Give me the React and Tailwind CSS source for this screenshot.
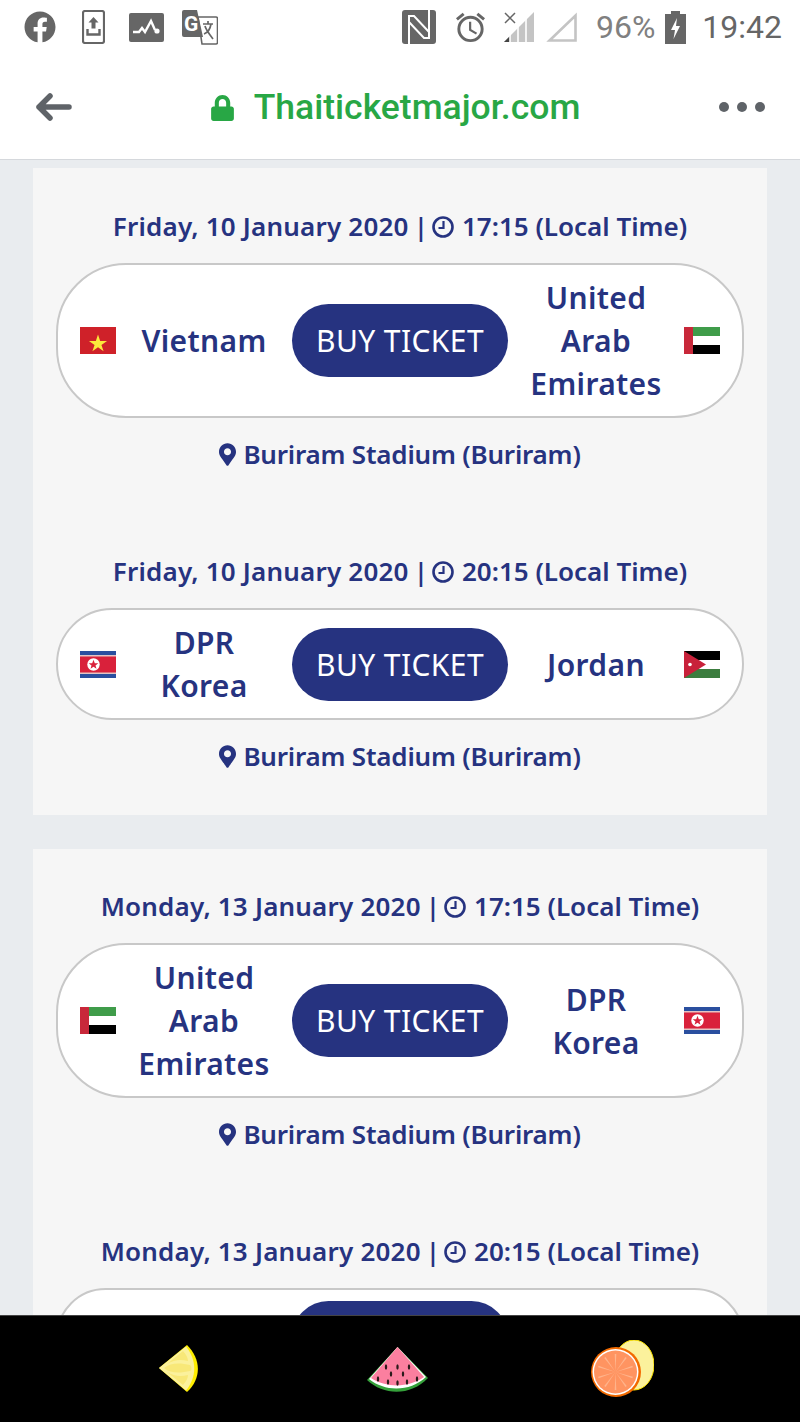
import { FaFacebook, FaMapMarkerAlt, FaLock } from 'react-icons/fa';
import { MdOutlineAlarm } from 'react-icons/md';

const matches = [
    { date: 'Friday, 10 January 2020', time: '17:15', home: ['Vietnam'], homeFlag: 'vn', away: ['United', 'Arab', 'Emirates'], awayFlag: 'ae' },
    { date: 'Friday, 10 January 2020', time: '20:15', home: ['DPR', 'Korea'], homeFlag: 'kp', away: ['Jordan'], awayFlag: 'jo' },
    { date: 'Monday, 13 January 2020', time: '17:15', home: ['United', 'Arab', 'Emirates'], homeFlag: 'ae', away: ['DPR', 'Korea'], awayFlag: 'kp' },
    // only the top of this row shows above the black bar
    { date: 'Monday, 13 January 2020', time: '20:15', cut: true },
];

function Flag({ code }) {
    return (
        <svg viewBox="0 0 36 27" className="w-9 h-[27px] shrink-0">
            {code === 'vn' && (
                <>
                    <rect width="36" height="27" fill="#cf2129" />
                    <path d="M18 5.500l2.700 8.200h8.600l-7 5 2.700 8-7-5-7 5 2.700-8-7-5h8.600z" transform="translate(3.600 3) scale(0.8)" fill="#fbe83c" />
                </>
            )}
            {code === 'ae' && (
                <>
                    <rect width="36" height="9" fill="#3f9c4a" />
                    <rect y="9" width="36" height="9" fill="#fff" />
                    <rect y="18" width="36" height="9" fill="#000" />
                    <rect width="9" height="27" fill="#c8283a" />
                </>
            )}
            {code === 'kp' && (
                <>
                    <rect width="36" height="27" fill="#2a4f9f" />
                    <rect y="4" width="36" height="19" fill="#e3c4c4" />
                    <rect y="5.500" width="36" height="16" fill="#d9213b" />
                    <circle cx="13.500" cy="13.500" r="6.200" fill="#fff" />
                    <path d="M13.500 8.800l1.300 3.400h3.500l-2.800 2.200 1 3.400-3-2-3 2 1-3.400-2.800-2.200h3.500z" fill="#d9213b" />
                </>
            )}
            {code === 'jo' && (
                <>
                    <rect width="36" height="9" fill="#000" />
                    <rect y="9" width="36" height="9" fill="#fff" />
                    <rect y="18" width="36" height="9" fill="#3c7d3f" />
                    <path d="M0 0L22 13.500 0 27z" fill="#c8213a" />
                    <circle cx="6" cy="13.500" r="1.800" fill="#fff" />
                </>
            )}
        </svg>
    );
}

function Team({ lines }) {
    return (
        <div className="flex-1 text-center text-[30px] leading-[43px] font-semibold tracking-[0.35px] text-[#263380]">
            {lines.map(line => <div key={line}>{line}</div>)}
        </div>
    );
}

function Match({ match, first }) {
    return (
        <div className={first ? '' : 'mt-[78px]'}>
            <div className="flex items-center justify-center h-[39px] text-[26px] font-semibold text-[#263380]">
                <span className="tracking-[0.2px]">{match.date}</span>
                <span className="ml-[5px]">|</span>
                <svg viewBox="0 0 22 22" className="w-[22px] h-[22px] ml-1 mr-2">
                    <circle cx="11" cy="11" r="9.500" fill="none" stroke="currentColor" strokeWidth="2.600" />
                    <path d="M11.500 5v7H6.500" fill="none" stroke="currentColor" strokeWidth="2.200" />
                </svg>
                <span>{match.time} (Local Time)</span>
            </div>
            <div className="mt-[17px] flex items-center justify-between px-[22px] py-[11px] bg-white border-2 border-[#c8c8c8] rounded-[70px]">
                {!match.cut && <Flag code={match.homeFlag} />}
                {!match.cut && <Team lines={match.home} />}
                <button className={`w-[216px] h-[73px] shrink-0 rounded-full bg-[#263380] text-white text-[30px] tracking-[0.4px] font-normal ${match.cut ? 'mx-auto' : ''}`}>
                    {!match.cut && 'BUY TICKET'}
                </button>
                {!match.cut && <Team lines={match.away} />}
                {!match.cut && <Flag code={match.awayFlag} />}
            </div>
            {!match.cut && (
                <div className="mt-[17px] flex items-center justify-center h-[39px] text-[26px] font-semibold tracking-[-0.2px] text-[#263380]">
                    <FaMapMarkerAlt className="mr-[7px] w-[17px] h-[23px]" />
                    <span>Buriram Stadium (Buriram)</span>
                </div>
            )}
        </div>
    );
}

function StatusBar() {
    return (
        <div className="flex items-center h-[54px] pl-6 pr-[18px] text-[#666] font-['Roboto',sans-serif]">
            <FaFacebook className="w-8 h-8" />
            <svg viewBox="0 0 23 34" className="ml-[26px] w-[23px] h-[34px]">
                <rect x="1" y="1" width="21" height="32" rx="2" fill="none" stroke="#666" strokeWidth="2.200" />
                <path d="M11.500 7l5 5.500h-3v6h-4v-6h-3z" fill="#666" />
                <path d="M5.500 19v5.500h12V19" fill="none" stroke="#666" strokeWidth="2.400" />
            </svg>
            <svg viewBox="0 0 35 29" className="ml-6 w-[35px] h-[29px]">
                <rect width="35" height="29" rx="2" fill="#666" />
                <path d="M4 19h6l3-4 3 4 6-11 4 9" fill="none" stroke="#fff" strokeWidth="2.400" />
                <circle cx="28" cy="18" r="2.600" fill="#fff" />
            </svg>
            <svg viewBox="0 0 36 35" className="ml-[18px] w-9 h-[35px]">
                <path d="M16 7h18a1.500 1.500 0 0 1 1.500 1.500v24a1.500 1.500 0 0 1-1.500 1.500H20z" fill="#fff" stroke="#666" strokeWidth="1.600" />
                <path d="M2 0h13l6 27H2a2 2 0 0 1-2-2V2a2 2 0 0 1 2-2z" fill="#666" />
                <text x="2" y="21" fontSize="21" fontWeight="700" fontFamily="Roboto" fill="#fff">G</text>
                <path d="M21 14h10M26 11v3M29 14c-1 6-4 9-7 10M23 16c1 4 5 9 8 13" fill="none" stroke="#666" strokeWidth="1.700" />
            </svg>

            <svg viewBox="0 0 34 34" className="ml-auto w-[34px] h-[34px]">
                <rect width="34" height="34" rx="3" fill="#666" />
                <path d="M7 34V6h5l15 16M27 0v28h-5L7 12" fill="none" stroke="#fff" strokeWidth="2" />
            </svg>
            <MdOutlineAlarm className="ml-[17px] w-[35px] h-[35px]" />
            <svg viewBox="0 0 30 30" className="ml-4 w-[30px] h-[30px]">
                <path d="M30 0v30H0L9 21 V21L30 0z" fill="#c4c4c4" />
                <path d="M0 30l6-6v6z" fill="#444" />
                <path d="M6 30V18M14 30V14M22 30V6" stroke="#fff" strokeWidth="1.600" />
                <path d="M1 1l10 10M11 1L1 11" stroke="#666" strokeWidth="1.500" />
            </svg>
            <svg viewBox="0 0 31 30" className="ml-3 w-[31px] h-[30px]">
                <path d="M29.500 3.500v25H3.500z" fill="none" stroke="#c4c4c4" strokeWidth="2.600" />
            </svg>
            <span className="ml-[19px] text-[32px] leading-none text-[#808080]">96%</span>
            <svg viewBox="0 0 21 33" className="ml-[10px] w-[21px] h-[33px]">
                <path d="M6 0h9v3h6v30H0V3h6z" fill="#666" />
                <path d="M12 7l-6 12h4l-1.500 9 6.500-13h-4z" fill="#fff" />
            </svg>
            <span className="ml-4 text-[32px] leading-none">19:42</span>
        </div>
    );
}

function Lemon() {
    return (
        <svg viewBox="0 0 40 47" className="w-10 h-[47px]">
            <path d="M0 23L28 0C42 14 43 33 28 47z" fill="#ffee00" />
            <path d="M0 23L27 1.500C38 15 38 32 27 45.500z" fill="#fbf19c" />
            <path d="M5 23C12 17 22 18 31 20c2 2 2 5 0 6-9 2-19 3-26-3zM8 19L24 6c3 3 5 7 5 10-8-2-14-1-21 3zM8 27l16 13c3-3 5-7 5-10-8 2-14 1-21-3z" fill="#f8e878" />
        </svg>
    );
}

function Watermelon() {
    const seeds = [[19, 20], [30.500, 20], [42, 20], [24, 27], [36, 27], [21, 35], [30.500, 36], [40, 35], [11, 32], [50, 32]];
    return (
        <svg viewBox="0 0 61 45" className="w-[61px] h-[45px]">
            <path d="M30.500 0L61 31C44 49 17 49 0 33z" fill="#35a03a" />
            <path d="M30.500 0L59 30C43 45 18 45 2 32z" fill="#fff" />
            <path d="M30.500 0L57 30C42 41 19 41 4 31z" fill="#fb7f9f" />
            {seeds.map(([x, y]) => (
                <ellipse key={`${x}-${y}`} cx={x} cy={y} rx="1.200" ry="2.800" fill="#2a1a1a" />
            ))}
        </svg>
    );
}

function Citrus() {
    const spokes = [0, 36, 72, 108, 144, 180, 216, 252, 288, 324];
    return (
        <svg viewBox="0 0 63 57" className="w-[63px] h-[57px]">
            <ellipse cx="43" cy="25" rx="20" ry="25" fill="#fbf19c" stroke="#ffe600" strokeWidth="1" />
            <ellipse cx="25" cy="32" rx="25" ry="25" fill="#f26a00" />
            <circle cx="24.500" cy="32" r="23" fill="#fff" />
            <circle cx="24.500" cy="32" r="21.500" fill="#ff9461" />
            {spokes.map(a => (
                <path key={a} d="M24.500 32l-0.800-18h1.600z" fill="#ffb48c" transform={`rotate(${a} 24.500 32)`} />
            ))}
        </svg>
    );
}

export default function App() {
    return (
        <div className="flex flex-col w-[800px] h-[1422px] overflow-hidden bg-[#e9ecef] font-['Noto_Sans',sans-serif]">
            <div className="shrink-0 bg-white border-b border-[#d5d8dc] h-40">
                <StatusBar />
                <div className="flex items-center h-[105px] pl-9 pr-[35px]">
                    <svg viewBox="0 0 36 28" className="w-9 h-7">
                        <path d="M14 3L3 14l11 11M3 14h30" fill="none" stroke="#5f6368" strokeWidth="5.500" strokeLinecap="round" strokeLinejoin="round" />
                    </svg>
                    <div className="flex-1 flex items-center justify-center pt-[3px] text-[#28a745] font-['Roboto',sans-serif] font-medium text-[35.5px]">
                        <FaLock className="w-[23px] h-[26px] mr-[20px]" />
                        <span>Thaiticketmajor.com</span>
                    </div>
                    <div className="flex gap-[8px]">
                        <span className="w-[10px] h-[10px] rounded-full bg-[#5f6368]"></span>
                        <span className="w-[10px] h-[10px] rounded-full bg-[#5f6368]"></span>
                        <span className="w-[10px] h-[10px] rounded-full bg-[#5f6368]"></span>
                    </div>
                </div>
            </div>

            <div className="flex-1 min-h-0 overflow-hidden px-[33px] pt-2">
                <div className="bg-[#f6f6f6] px-[23px] pt-[39px] pb-[39px]">
                    <Match match={matches[0]} first />
                    <Match match={matches[1]} />
                </div>
                <div className="mt-[34px] bg-[#f6f6f6] px-[23px] pt-[38px] pb-[39px]">
                    <Match match={matches[2]} first />
                    <Match match={matches[3]} />
                </div>
            </div>

            <div className="shrink-0 h-[107px] bg-black border-t border-[#444] flex items-center">
                <div className="ml-[159px] mt-[-1px]"><Lemon /></div>
                <div className="ml-[168px]"><Watermelon /></div>
                <div className="ml-[163px] mt-[-1px]"><Citrus /></div>
            </div>
        </div>
    );
}
